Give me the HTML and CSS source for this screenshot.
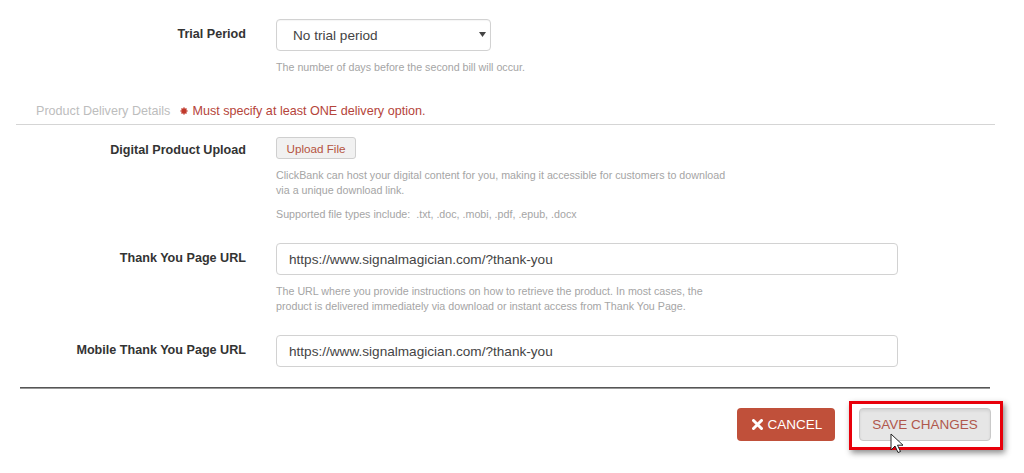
FILE: index.html
```html
<!DOCTYPE html>
<html>
<head>
<meta charset="utf-8">
<link rel="stylesheet" href="styles.css">
</head>
<body>
<div class="page">
  <div class="row row-trial">
    <div class="label">Trial Period</div>
    <div class="field">
      <div class="select">
        <span>No trial period</span>
        <svg class="caret" width="7" height="5" viewBox="0 0 7 5"><path d="M0 0h7L3.5 5z" fill="#444"/></svg>
      </div>
      <p class="help">The number of days before the second bill will occur.</p>
    </div>
  </div>

  <div class="section">
    <span class="section-title">Product Delivery Details</span>
    <span class="req"><svg class="star" width="8" height="8" viewBox="0 0 8 8"><path d="M4 0.5v7M0.5 4h7M1.5 1.5l5 5M6.5 1.5l-5 5" stroke="#c0392b" stroke-width="1.6"/></svg> Must specify at least ONE delivery option.</span>
  </div>

  <div class="row row-upload">
    <div class="label">Digital Product Upload</div>
    <div class="field">
      <button class="upload">Upload File</button>
      <p class="help">ClickBank can host your digital content for you, making it accessible for customers to download<br>via a unique download link.</p>
      <p class="help">Supported file types include:&nbsp; .txt, .doc, .mobi, .pdf, .epub, .docx</p>
    </div>
  </div>

  <div class="row row-url">
    <div class="label">Thank You Page URL</div>
    <div class="field">
      <div class="input">https://www.signalmagician.com/?thank-you</div>
      <p class="help">The URL where you provide instructions on how to retrieve the product. In most cases, the<br>product is delivered immediately via download or instant access from Thank You Page.</p>
    </div>
  </div>

  <div class="row row-mobile">
    <div class="label">Mobile Thank You Page URL</div>
    <div class="field">
      <div class="input">https://www.signalmagician.com/?thank-you</div>
    </div>
  </div>

  <div class="divider"></div>

  <div class="actions">
    <button class="cancel">
      <svg width="11" height="11" viewBox="0 0 11 11"><path d="M1.5 1.5l8 8M9.5 1.5l-8 8" stroke="#fff" stroke-width="3" stroke-linecap="round"/></svg>
      CANCEL
    </button>
    <div class="highlight">
      <button class="save">SAVE CHANGES</button>
      <svg class="cursor" width="14" height="21" viewBox="0 0 14 21"><path d="M1 1v16l4-4 3 6.5 2.5-1-3-6.3H13z" fill="#fff" stroke="#222" stroke-width="1" stroke-linejoin="round"/></svg>
    </div>
  </div>
</div>
</body>
</html>
```

FILE: styles.css
```css
html, body {
  margin: 0;
  padding: 0;
  background: #fff;
}
body {
  font-family: "Liberation Sans", Arial, sans-serif;
  color: #333;
}
.page {
  width: 1024px;
  height: 473px;
  overflow: hidden;
  padding-top: 19px;
  box-sizing: border-box;
}
.row {
  display: grid;
  grid-template-columns: 246px 1fr;
  column-gap: 30px;
}
.label {
  text-align: right;
  font-weight: bold;
  font-size: 12.6px;
  line-height: 18px;
  color: #333;
}
.field {
  display: flex;
  flex-direction: column;
  align-items: flex-start;
}
.row-trial .label { padding-top: 6px; }
.select {
  width: 215px;
  height: 32px;
  box-sizing: border-box;
  border: 1px solid #d2d2d2;
  border-radius: 4px;
  display: flex;
  align-items: center;
  justify-content: space-between;
  padding: 0 4px 0 16px;
  font-size: 13.6px;
  color: #444;
  box-shadow: inset 0 1px 1px rgba(0,0,0,0.04);
}
.caret { margin-top: -2px; }
.help {
  margin: 9px 0 0;
  font-size: 10.7px;
  line-height: 15px;
  color: #a5a5a5;
}
.section {
  margin: 27px 29px 0 16px;
  padding: 0 0 4px 20px;
  border-bottom: 1px solid #d5d5d5;
  font-size: 12.6px;
  line-height: 18px;
}
.section-title { color: #bdbdbd; }
.req { color: #b5443a; margin-left: 6px; }
.star { vertical-align: 0; margin-right: 1px; }
.row-upload { margin-top: 12px; }
.row-upload .label { padding-top: 4px; }
.upload {
  height: 22px;
  width: 80px;
  padding: 0;
  border: 1px solid #cfcfcf;
  border-radius: 3px;
  background: #f1f1f1;
  color: #b5543f;
  font-family: "Liberation Sans", Arial, sans-serif;
  font-size: 11.7px;
}
.row-url { margin-top: 21px; }
.row-url .label, .row-mobile .label { padding-top: 6px; }
.input {
  width: 622px;
  height: 32px;
  box-sizing: border-box;
  border: 1px solid #d2d2d2;
  border-radius: 4px;
  display: flex;
  align-items: center;
  padding-left: 12px;
  font-size: 13.6px;
  color: #444;
}
.row-mobile { margin-top: 21px; }
.divider {
  margin: 20px 34px 0 20px;
  height: 0;
  border-top: 1px solid #555;
  border-bottom: 1px solid #999;
}
.actions {
  margin-top: 12px;
  display: flex;
  justify-content: flex-end;
  align-items: flex-start;
  padding-right: 21px;
}
.cancel {
  margin-top: 7px;
  width: 98px;
  height: 33px;
  border: none;
  border-radius: 4px;
  background: #c0503a;
  color: #fff;
  font-family: "Liberation Sans", Arial, sans-serif;
  font-size: 13.5px;
  display: flex;
  align-items: center;
  justify-content: center;
  gap: 5px;
  padding: 0 0 0 2px;
}
.cancel svg { margin-top: -1px; }
.highlight {
  position: relative;
  margin-left: 14px;
  border: 3px solid #e8000b;
  padding: 4px 9px 6px 7px;
  box-shadow: 2px 3px 6px rgba(0,0,0,0.45);
}
.save {
  display: block;
  width: 132px;
  height: 33px;
  border: 1px solid #c9c9c9;
  border-radius: 4px;
  background: #e6e6e6;
  color: #b0584c;
  font-family: "Liberation Sans", Arial, sans-serif;
  font-size: 13.5px;
  padding: 0;
  box-shadow: inset 0 2px 3px rgba(0,0,0,0.08);
}
.cursor {
  position: absolute;
  left: 38px;
  top: 29px;
}
```
